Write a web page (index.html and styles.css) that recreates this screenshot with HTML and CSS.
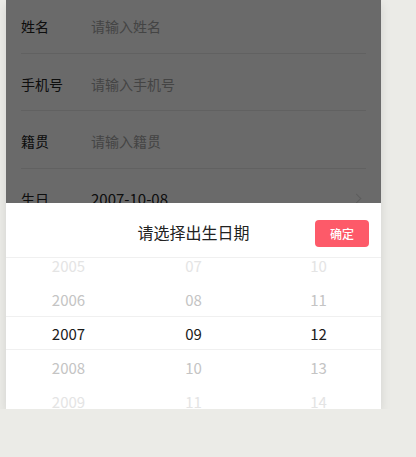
FILE: index.html
```html
<!DOCTYPE html>
<html lang="zh">
<head>
<meta charset="utf-8">
<link rel="stylesheet" href="styles.css">
</head>
<body>
<div class="phone">
  <div class="form">
    <div class="row"><span class="label">姓名</span><span class="ph">请输入姓名</span></div>
    <div class="row"><span class="label">手机号</span><span class="ph">请输入手机号</span></div>
    <div class="row"><span class="label">籍贯</span><span class="ph">请输入籍贯</span></div>
    <div class="row"><span class="label">生日</span><span class="val">2007-10-08</span><span class="arrow"></span></div>
    <div class="row"><span class="label">性别</span><span class="ph">请选择性别</span></div>
  </div>
  <div class="mask"></div>
  <div class="picker">
    <div class="head">
      <span></span>
      <span class="title">请选择出生日期</span>
      <span class="btn">确定</span>
    </div>
    <div class="wheel">
      <div class="col">
        <div class="it far">2005</div>
        <div class="it near">2006</div>
        <div class="it sel">2007</div>
        <div class="it near">2008</div>
        <div class="it far">2009</div>
      </div>
      <div class="col">
        <div class="it far">07</div>
        <div class="it near">08</div>
        <div class="it sel">09</div>
        <div class="it near">10</div>
        <div class="it far">11</div>
      </div>
      <div class="col">
        <div class="it far">10</div>
        <div class="it near">11</div>
        <div class="it sel">12</div>
        <div class="it near">13</div>
        <div class="it far">14</div>
      </div>
      <div class="band"></div>
    </div>
  </div>
</div>
</body>
</html>
```
FILE: styles.css
```css
html, body {
  margin: 0;
  padding: 0;
  background: #ebebe7;
  font-family: "Noto Sans CJK SC", "Noto Sans", sans-serif;
}
.phone {
  position: relative;
  width: 375px;
  height: 409px;
  margin-left: 6px;
  background: #fff;
  overflow: hidden;
  box-shadow: 0 4px 10px rgba(0, 0, 0, 0.1);
}
.form {
  margin-top: -4px;
  padding: 0 15px;
}
.row {
  display: flex;
  align-items: center;
  height: 57.5px;
  padding-top: 4px;
  box-sizing: border-box;
  border-bottom: 1px solid #eaeaea;
  font-size: 14px;
  line-height: 20px;
}
.label {
  width: 70px;
  color: #222;
}
.ph {
  color: #a5a5a5;
}
.val {
  flex: 1;
  color: #222;
  font-size: 15px;
}
.arrow {
  width: 6px;
  height: 6px;
  border-top: 1px solid #dedede;
  border-right: 1px solid #dedede;
  transform: rotate(45deg);
  margin-right: 6px;
}
.mask {
  position: absolute;
  inset: 0;
  background: rgba(0, 0, 0, 0.585);
}
.picker {
  position: absolute;
  left: 0;
  right: 0;
  bottom: 0;
  height: 206px;
  background: #fff;
}
.head {
  display: grid;
  grid-template-columns: 1fr auto 1fr;
  align-items: center;
  height: 55px;
  box-sizing: border-box;
  padding: 3px 12px 0;
  border-bottom: 1px solid #f0f0f0;
}
.title {
  font-size: 16px;
  color: #222;
}
.btn {
  justify-self: end;
  width: 54px;
  height: 27px;
  line-height: 27px;
  text-align: center;
  border-radius: 4px;
  background: #fd5a69;
  color: #fff;
  font-size: 12px;
  font-weight: 500;
  margin-top: 3px;
}
.wheel {
  position: relative;
  display: grid;
  grid-template-columns: repeat(3, 1fr);
  height: 151px;
  overflow: hidden;
}
.col {
  display: flex;
  flex-direction: column;
  justify-content: center;
  overflow: hidden;
}
.it {
  flex: none;
  height: 34px;
  line-height: 34px;
  text-align: center;
  font-size: 15px;
}
.far { color: #e4e4e4; }
.near { color: #c4c4c4; }
.sel { color: #1a1a1a; }
.band {
  position: absolute;
  left: 0;
  right: 0;
  top: 58px;
  height: 34px;
  box-sizing: border-box;
  border-top: 1px solid #f0f0f0;
  border-bottom: 1px solid #f0f0f0;
  pointer-events: none;
}
```
